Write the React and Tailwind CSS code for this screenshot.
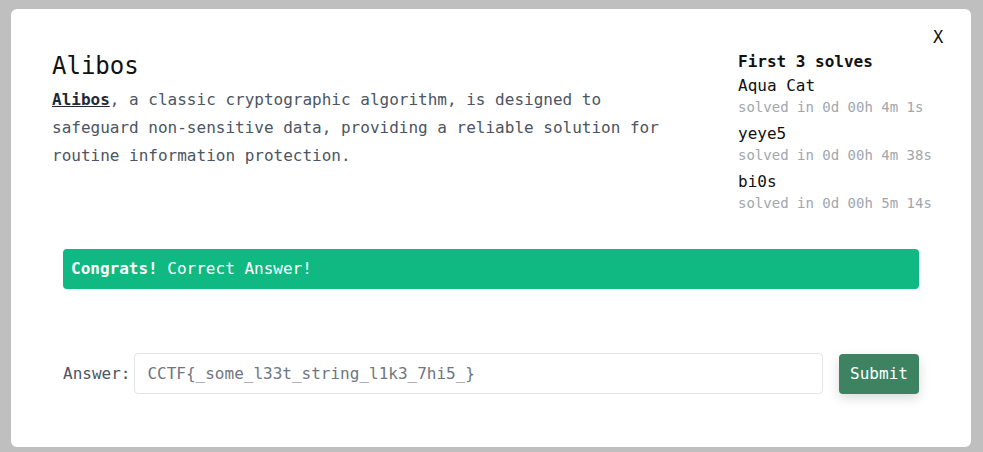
export default function App() {
  const solves = [
    { name: "Aqua Cat", time: "solved in 0d 00h 4m 1s" },
    { name: "yeye5", time: "solved in 0d 00h 4m 38s" },
    { name: "bi0s", time: "solved in 0d 00h 5m 14s" },
  ];
  return (
    <div
      className="min-h-screen bg-[#bfbfbf] pt-[9px]"
      style={{ fontFamily: '"DejaVu Sans Mono", "Liberation Mono", monospace' }}
    >
      <div className="relative ml-[11px] w-[960px] h-[438px] rounded-md bg-white pt-[41px] px-[41px]">
        <button className="absolute top-[16px] right-[21px] w-[24px] h-[24px] flex items-center justify-center text-[17px] leading-none text-[#111]">
          X
        </button>
        <div className="flex">
          <div className="w-[686px] shrink-0">
            <h1 className="text-[24px] leading-[32px] text-[#111] mb-1">Alibos</h1>
            <p className="w-[620px] text-[16px] leading-[28px] text-[#4b5563]">
              <a className="font-bold underline text-[#1f2937]">Alibos</a>, a classic cryptographic
              algorithm, is designed to safeguard non-sensitive data, providing a reliable solution
              for routine information protection.
            </p>
          </div>
          <div className="flex-1 whitespace-nowrap">
            <div className="text-[16px] leading-[24px] font-bold text-[#111]">First 3 solves</div>
            {solves.map((s, i) => (
              <div key={s.name} className={i > 0 ? "mt-[6px]" : ""}>
                <div className="text-[16px] leading-[24px] text-[#111]">{s.name}</div>
                <div className="text-[14px] leading-[18px] text-[#a1a6ad]">{s.time}</div>
              </div>
            ))}
          </div>
        </div>
        <div className="mx-[11px] mt-[37px] h-[40px] rounded-[4px] bg-[#10b981] px-2 flex items-center text-[16px] text-white">
          <span className="font-bold">Congrats!</span>
          <span>&nbsp;Correct Answer!</span>
        </div>
        <div className="mx-[11px] mt-[64px] flex items-center">
          <label className="text-[16px] text-[#4b5563] mr-[4px]">Answer:</label>
          <input
            className="flex-1 h-[41px] rounded-[4px] border border-[#e3e5e8] px-3 text-[16px] text-[#374151] placeholder:text-[#6f7680] outline-none"
            placeholder="CCTF{_some_l33t_string_l1k3_7hi5_}"
          />
          <button className="ml-4 h-[40px] w-[80px] rounded-[4px] bg-[#3d8361] text-[16px] text-white shadow-[0_4px_12px_rgba(0,0,0,0.15)]">
            Submit
          </button>
        </div>
      </div>
    </div>
  );
}
